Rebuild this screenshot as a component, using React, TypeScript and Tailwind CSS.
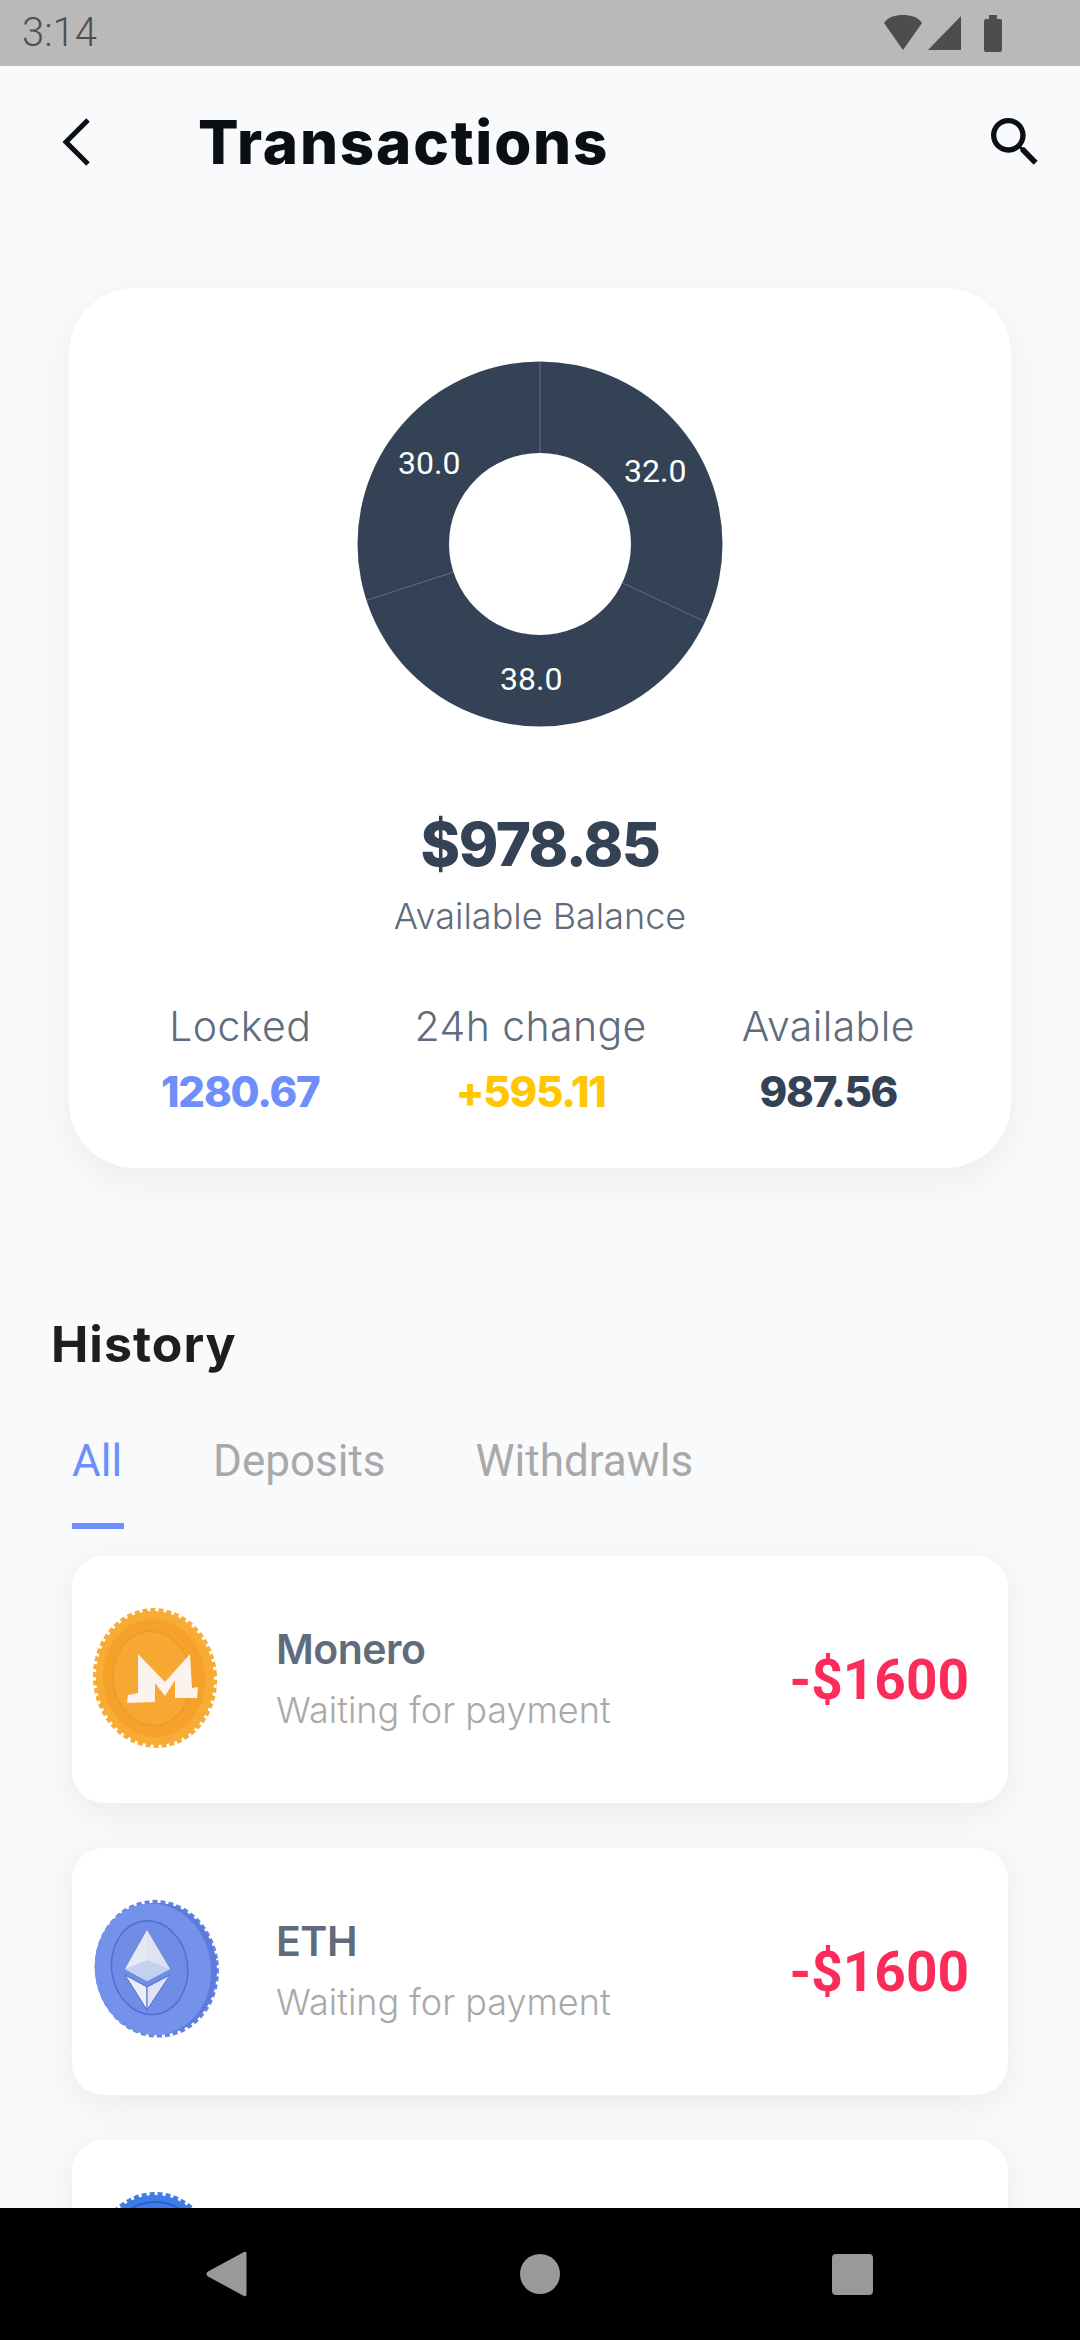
const poppinsish = "font-['Inter','Liberation_Sans',sans-serif]";
const roboto = "font-['Roboto','Liberation_Sans',sans-serif]";

function StatusBar() {
  return (
    <div className="flex h-[66px] shrink-0 items-center justify-between bg-[#b9b9ba] pl-[22px] pr-[76px]">
      <span className={`${roboto} text-[40px] font-light text-[#4f4f50]`}>3:14</span>
      <svg width="122" height="38" viewBox="0 0 122 38" fill="#4d4d4d">
        <path d="M2 9C6 3 13 1 21 1s15 2 19 8L21 36z" />
        <path d="M79 2v34H46z" />
        <path d="M106 5h3V1h8v4h3a2 2 0 0 1 2 2v29a2 2 0 0 1-2 2h-14a2 2 0 0 1-2-2V7a2 2 0 0 1 2-2z" transform="translate(-2 0)" />
      </svg>
    </div>
  );
}

function NavBar() {
  return (
    <div className="flex h-[132px] shrink-0 items-center justify-between bg-black pl-[204px] pr-[207px]">
      <svg width="44" height="48" viewBox="0 0 44 48" fill="#999999">
        <path d="M40 2c1.500-.8 2.500 0 2.500 2v40c0 2-1 2.800-2.500 2L4 26.500c-2-1-2-3.500 0-5z" />
      </svg>
      <div className="h-10 w-10 rounded-full bg-[#999999]" />
      <div className="h-[41px] w-[41px] rounded-[4px] bg-[#999999]" />
    </div>
  );
}

function Donut() {
  return (
    <div className="relative h-[366px] w-[366px]">
      <svg width="366" height="366" viewBox="-183 -183 366 366">
        <circle r="182.500" fill="#344256" />
        <path d="M0 -182L0 -91" stroke="#5f6e80" strokeWidth="1" />
        <path d="M164.700 77.500L82.300 38.800" stroke="#5f6e80" strokeWidth="1" />
        <path d="M-173 56.200L-86.500 28.100" stroke="#5f6e80" strokeWidth="1" />
        <circle r="91" fill="#ffffff" />
      </svg>
      <span className={`${roboto} absolute left-[41px] top-[83px] text-[32px] leading-[38px] text-white`}>30.0</span>
      <span className={`${roboto} absolute left-[267px] top-[91px] text-[32px] leading-[38px] text-white`}>32.0</span>
      <span className={`${roboto} absolute left-[143px] top-[299px] text-[32px] leading-[38px] text-white`}>38.0</span>
    </div>
  );
}

function Stat({ label, value, color }: { label: string; value: string; color: string }) {
  return (
    <div className="flex flex-col items-center">
      <span className={`${poppinsish} text-[41px] font-light leading-[54px] tracking-[0.400px] text-[#606c7c]`}>{label}</span>
      <span className={`${poppinsish} mt-[13px] text-[42px] font-extrabold leading-[52px] tracking-[-1.200px] ${color}`}>{value}</span>
    </div>
  );
}

function Teeth({ cx, cy, rx, ry, color }: { cx: number; cy: number; rx: number; ry: number; color: string }) {
  return <ellipse cx={cx} cy={cy} rx={rx} ry={ry} fill="none" stroke={color} strokeWidth="4" strokeDasharray="5 3" />;
}

function MoneroCoin() {
  return (
    <svg width="130" height="146" viewBox="0 0 130 146">
      <g transform="rotate(-6 65 73)">
        <Teeth cx={65} cy={73} rx={60} ry={68} color="#f8ac35" />
        <ellipse cx="65" cy="73" rx="59" ry="67" fill="#f8ac35" />
        <ellipse cx="64" cy="73" rx="51" ry="59" fill="#f5a12a" />
        <ellipse cx="62" cy="73" rx="39" ry="47" fill="#f7a832" stroke="#f0982a" strokeWidth="1.500" />
      </g>
      <path d="M48 49L75 77L100 49L102 83L108 82L107 93L85 93L85 75L75 91L65 78L65 97L37 98L38 90L48 88z" fill="#fbf3ee" />
    </svg>
  );
}

function EthCoin() {
  return (
    <svg width="130" height="146" viewBox="0 0 130 146">
      <g transform="rotate(-8 65 73)">
        <Teeth cx={67} cy={72} rx={60} ry={67} color="#6482e0" />
        <ellipse cx="68" cy="72" rx="59" ry="66" fill="#5d7bdc" />
        <ellipse cx="63" cy="72" rx="58" ry="66" fill="#7492ea" />
        <ellipse cx="60" cy="70" rx="38" ry="47" fill="#6f8de4" stroke="#4f6dd3" strokeWidth="1.500" />
      </g>
      <path d="M57 33L35 72L57 84z" fill="#e6e9f4" />
      <path d="M57 33L80 72L57 84z" fill="#dfe3f2" />
      <path d="M57 63L35 72L57 84L80 72z" fill="#c3d0f0" />
      <path d="M35 78L57 90V113z" fill="#eceef6" stroke="#4f6dd3" strokeWidth="1" />
      <path d="M80 78L57 90V113z" fill="#dfe3f2" stroke="#4f6dd3" strokeWidth="1" />
    </svg>
  );
}

function BlueCoin() {
  return (
    <svg width="130" height="146" viewBox="0 0 130 146">
      <Teeth cx={65} cy={73} rx={60} ry={68} color="#3f7ce6" />
      <ellipse cx="65" cy="73" rx="59" ry="67" fill="#3f7ce6" />
      <ellipse cx="65" cy="73" rx="52" ry="60" fill="none" stroke="#2a5fd6" strokeWidth="2" />
    </svg>
  );
}

function Row({ icon, name }: { icon: React.ReactNode; name: string }) {
  return (
    <div className="mx-[72px] mb-[45px] flex h-[247px] shrink-0 items-center rounded-[32px] bg-white pl-[18px] pr-[39px] shadow-[0_8px_36px_rgba(0,0,0,0.07)]">
      <div className="-mt-[3px] w-[186px] shrink-0">{icon}</div>
      <div className="flex flex-1 flex-col pb-[4px]">
        <span className={`${poppinsish} text-[41px] font-semibold leading-[50px] tracking-[-0.500px] text-[#606c7c]`}>{name}</span>
        <span className={`${poppinsish} mt-[15px] text-[36px] font-light leading-[42px] text-[#a9a9a9]`}>Waiting for payment</span>
      </div>
      <span className={`${roboto} text-[55px] font-bold leading-[66px] text-[#fb2c5a]`}>-$1600</span>
    </div>
  );
}

export default function App() {
  return (
    <div className="flex h-[2340px] w-[1080px] flex-col overflow-hidden bg-[#f9fafc]">
      <StatusBar />
      <main className="min-h-0 flex-1 overflow-hidden">
        <header className="flex h-[152px] items-center justify-between pl-[58px] pr-[33px]">
          <div className="flex items-center">
            <svg width="36" height="50" viewBox="0 0 36 50" fill="none" stroke="#0b0f13" strokeWidth="5">
              <path d="M30 3L8 25L30 47" />
            </svg>
            <h1 className={`${poppinsish} ml-[104px] text-[60px] font-extrabold leading-[70px] tracking-[1.800px] text-[#0b0f13]`}>Transactions</h1>
          </div>
          <svg width="64" height="64" viewBox="0 0 24 24" fill="#0b0f13">
            <path d="M15.500 14h-.79l-.28-.27C15.410 12.590 16 11.110 16 9.500 16 5.910 13.090 3 9.500 3S3 5.910 3 9.500 5.910 16 9.500 16c1.610 0 3.090-.59 4.230-1.570l.27.28v.79l5 4.990L20.490 19l-4.990-5zm-6 0C7.010 14 5 11.990 5 9.500S7.010 5 9.500 5 14 7.010 14 9.500 11.990 14 9.500 14z" />
          </svg>
        </header>

        <section className="mx-[69px] mt-[70px] flex h-[880px] flex-col items-center rounded-[66px] bg-white pt-[73px] shadow-[0_12px_44px_rgba(0,0,0,0.06)]">
          <Donut />
          <div className={`${poppinsish} mt-[79px] text-[60px] font-extrabold leading-[76px] tracking-[-1.500px] text-[#344256]`}>$978.85</div>
          <div className={`${poppinsish} mt-[12px] text-[36px] font-light leading-[44px] text-[#606c7c]`}>Available Balance</div>
          <div className="mt-[61px] flex w-full gap-[95px] pl-[92px]">
            <Stat label="Locked" value="1280.67" color="text-[#6e8efb]" />
            <Stat label="24h change" value="+595.11" color="text-[#ffc700]" />
            <Stat label="Available" value="987.56" color="text-[#344256]" />
          </div>
        </section>

        <h2 className={`${poppinsish} ml-[51px] mt-[146px] text-[50px] font-bold leading-[60px] tracking-[1px] text-[#1e1e1e]`}>History</h2>

        <div className={`${roboto} ml-[72px] mt-[61px] flex text-[44px] leading-[52px] text-[#a9a9a9]`}>
          <div className="flex w-[52px] flex-col">
            <span className="text-[#6e8efb]">All</span>
            <div className="mt-[36px] h-[6px] w-[52px] bg-[#6e8efb]" />
          </div>
          <span className="ml-[89px]">Deposits</span>
          <span className="ml-[90px]">Withdrawls</span>
        </div>

        <div className="mt-[27px] flex flex-col">
          <Row icon={<MoneroCoin />} name="Monero" />
          <Row icon={<EthCoin />} name="ETH" />
          <div className="mx-[72px] h-[247px] shrink-0 rounded-[32px] bg-white pl-[18px] pt-[49px] shadow-[0_8px_36px_rgba(0,0,0,0.07)]">
            <BlueCoin />
          </div>
        </div>
      </main>
      <NavBar />
    </div>
  );
}
